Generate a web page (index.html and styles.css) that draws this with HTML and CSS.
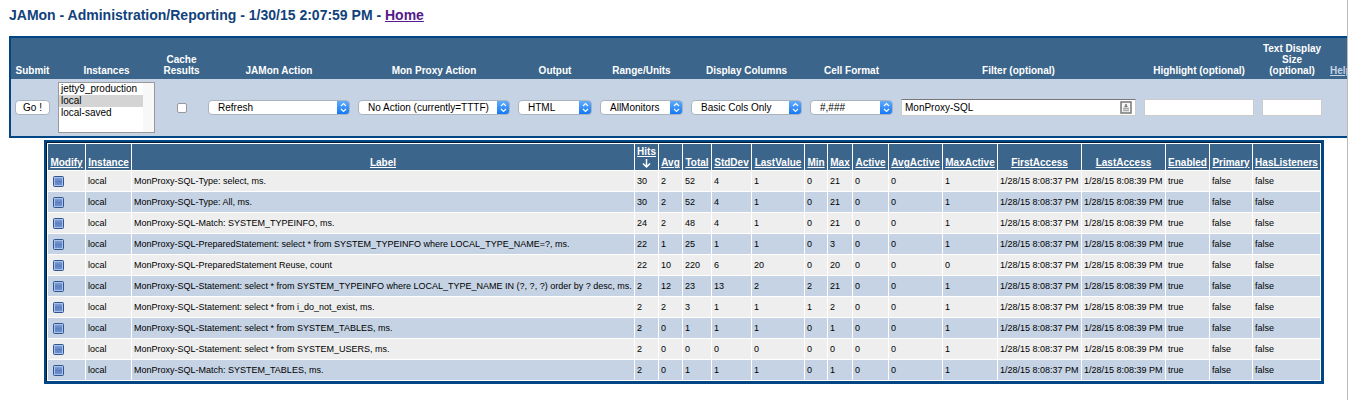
FILE: index.html
```html
<!DOCTYPE html>
<html lang="en">
<head>
<meta charset="utf-8">
<title>JAMon - Administration/Reporting</title>
<link rel="stylesheet" href="styles.css">
</head>
<body>
<svg class="defs" aria-hidden="true">
  <defs>
    <linearGradient id="box-fill" x1="0" y1="0" x2="0" y2="1">
      <stop offset="0" stop-color="#7f9cd3"/>
      <stop offset="0.5" stop-color="#5c80c2"/>
      <stop offset="1" stop-color="#6f90cd"/>
    </linearGradient>
    <symbol id="modify" viewBox="0 0 11 11">
      <rect x="0.5" y="0.5" width="10" height="10" rx="1" fill="#a9c1e8" stroke="#2f5590"/>
      <rect x="2" y="2" width="7" height="7" fill="url(#box-fill)"/>
    </symbol>
  </defs>
</svg>
<main class="page">
<h1 class="title">JAMon - Administration/Reporting - 1/30/15 2:07:59 PM - <a href="#home">Home</a></h1>
<form class="controls">
<table class="control-table">
<colgroup><col class="c-submit"><col class="c-instances"><col class="c-cache"><col class="c-action"><col class="c-proxy"><col class="c-output"><col class="c-range"><col class="c-display"><col class="c-format"><col class="c-filter"><col class="c-highlight"><col class="c-size"><col class="c-help"></colgroup>
<thead><tr>
<th>Submit</th>
<th><label for="instances">Instances</label></th>
<th><label for="cache">Cache Results</label></th>
<th><label for="action">JAMon Action</label></th>
<th><label for="proxy">Mon Proxy Action</label></th>
<th><label for="output">Output</label></th>
<th><label for="range">Range/Units</label></th>
<th><label for="display">Display Columns</label></th>
<th><label for="format">Cell Format</label></th>
<th><label for="filter">Filter (optional)</label></th>
<th><label for="highlight">Highlight (optional)</label></th>
<th><label for="size">Text Display Size (optional)</label></th>
<th class="help"><a href="#help">Help</a></th>
</tr></thead>
<tbody><tr>
<td><button class="go" type="button">Go !</button></td>
<td><select class="list" id="instances" multiple size="4"><option>jetty9_production</option><option class="chosen">local</option><option>local-saved</option></select></td>
<td class="center"><input class="check" type="checkbox" id="cache"></td>
<td><select class="pick" id="action"><option>Refresh</option></select></td>
<td><select class="pick" id="proxy"><option>No Action (currently=TTTF)</option></select></td>
<td><select class="pick" id="output"><option>HTML</option></select></td>
<td><select class="pick" id="range"><option>AllMonitors</option></select></td>
<td><select class="pick" id="display"><option>Basic Cols Only</option></select></td>
<td><select class="pick" id="format"><option>#,###</option></select></td>
<td><div class="filter-box"><input class="filter" type="text" id="filter" value="MonProxy-SQL"><svg class="badge" viewBox="0 0 12 13" aria-hidden="true"><rect x="1" y="1" width="10" height="11" fill="#f6f6f6" stroke="#777" stroke-width="1.5"/><path d="M6 3V6M4.500 5.500H7.500" stroke="#777" stroke-width="1.500"/><path d="M3 7.500H9M3 9.500H9" stroke="#aaa" stroke-width="1.500"/></svg></div></td>
<td><input class="plain" type="text" id="highlight"></td>
<td><input class="plain" type="text" id="size"></td>
<td></td>
</tr></tbody>
</table>
</form>
<div class="report-frame">
<table class="report">
<colgroup><col class="r-modify"><col class="r-instance"><col class="r-label"><col class="r-hits"><col class="r-hits"><col class="r-total"><col class="r-std"><col class="r-last"><col class="r-min"><col class="r-max"><col class="r-active"><col class="r-avgactive"><col class="r-maxactive"><col class="r-date"><col class="r-date"><col class="r-enabled"><col class="r-primary"><col class="r-listeners"></colgroup>
<thead><tr><th><a href="#modify-col">Modify</a></th><th><a href="#instance">Instance</a></th><th><a href="#label">Label</a></th><th><a href="#hits">Hits</a><br><svg class="arrow" viewBox="0 0 9 9" role="img" aria-label="sorted descending"><path d="M4.500 0V8M1 4.500L4.500 8L8 4.500" fill="none" stroke="#fff" stroke-width="1.500"/></svg></th><th><a href="#avg">Avg</a></th><th><a href="#total">Total</a></th><th><a href="#stddev">StdDev</a></th><th><a href="#lastvalue">LastValue</a></th><th><a href="#min">Min</a></th><th><a href="#max">Max</a></th><th><a href="#active">Active</a></th><th><a href="#avgactive">AvgActive</a></th><th><a href="#maxactive">MaxActive</a></th><th><a href="#firstaccess">FirstAccess</a></th><th><a href="#lastaccess">LastAccess</a></th><th><a href="#enabled">Enabled</a></th><th><a href="#primary">Primary</a></th><th><a href="#haslisteners">HasListeners</a></th></tr></thead>
<tbody>
<tr><td><a class="modify" href="#m1" aria-label="Modify"><svg><use href="#modify"/></svg></a></td><td>local</td><td>MonProxy-SQL-Type: select, ms.</td><td>30</td><td>2</td><td>52</td><td>4</td><td>1</td><td>0</td><td>21</td><td>0</td><td>0</td><td>1</td><td>1/28/15 8:08:37 PM</td><td>1/28/15 8:08:39 PM</td><td>true</td><td>false</td><td>false</td></tr>
<tr><td><a class="modify" href="#m2" aria-label="Modify"><svg><use href="#modify"/></svg></a></td><td>local</td><td>MonProxy-SQL-Type: All, ms.</td><td>30</td><td>2</td><td>52</td><td>4</td><td>1</td><td>0</td><td>21</td><td>0</td><td>0</td><td>1</td><td>1/28/15 8:08:37 PM</td><td>1/28/15 8:08:39 PM</td><td>true</td><td>false</td><td>false</td></tr>
<tr><td><a class="modify" href="#m3" aria-label="Modify"><svg><use href="#modify"/></svg></a></td><td>local</td><td>MonProxy-SQL-Match: SYSTEM_TYPEINFO, ms.</td><td>24</td><td>2</td><td>48</td><td>4</td><td>1</td><td>0</td><td>21</td><td>0</td><td>0</td><td>1</td><td>1/28/15 8:08:37 PM</td><td>1/28/15 8:08:39 PM</td><td>true</td><td>false</td><td>false</td></tr>
<tr><td><a class="modify" href="#m4" aria-label="Modify"><svg><use href="#modify"/></svg></a></td><td>local</td><td>MonProxy-SQL-PreparedStatement: select * from SYSTEM_TYPEINFO where LOCAL_TYPE_NAME=?, ms.</td><td>22</td><td>1</td><td>25</td><td>1</td><td>1</td><td>0</td><td>3</td><td>0</td><td>0</td><td>1</td><td>1/28/15 8:08:37 PM</td><td>1/28/15 8:08:39 PM</td><td>true</td><td>false</td><td>false</td></tr>
<tr><td><a class="modify" href="#m5" aria-label="Modify"><svg><use href="#modify"/></svg></a></td><td>local</td><td>MonProxy-SQL-PreparedStatement Reuse, count</td><td>22</td><td>10</td><td>220</td><td>6</td><td>20</td><td>0</td><td>20</td><td>0</td><td>0</td><td>0</td><td>1/28/15 8:08:37 PM</td><td>1/28/15 8:08:39 PM</td><td>true</td><td>false</td><td>false</td></tr>
<tr><td><a class="modify" href="#m6" aria-label="Modify"><svg><use href="#modify"/></svg></a></td><td>local</td><td>MonProxy-SQL-Statement: select * from SYSTEM_TYPEINFO where LOCAL_TYPE_NAME IN (?, ?, ?) order by ? desc, ms.</td><td>2</td><td>12</td><td>23</td><td>13</td><td>2</td><td>2</td><td>21</td><td>0</td><td>0</td><td>1</td><td>1/28/15 8:08:37 PM</td><td>1/28/15 8:08:39 PM</td><td>true</td><td>false</td><td>false</td></tr>
<tr><td><a class="modify" href="#m7" aria-label="Modify"><svg><use href="#modify"/></svg></a></td><td>local</td><td>MonProxy-SQL-Statement: select * from i_do_not_exist, ms.</td><td>2</td><td>2</td><td>3</td><td>1</td><td>1</td><td>1</td><td>2</td><td>0</td><td>0</td><td>1</td><td>1/28/15 8:08:37 PM</td><td>1/28/15 8:08:39 PM</td><td>true</td><td>false</td><td>false</td></tr>
<tr><td><a class="modify" href="#m8" aria-label="Modify"><svg><use href="#modify"/></svg></a></td><td>local</td><td>MonProxy-SQL-Statement: select * from SYSTEM_TABLES, ms.</td><td>2</td><td>0</td><td>1</td><td>1</td><td>1</td><td>0</td><td>1</td><td>0</td><td>0</td><td>1</td><td>1/28/15 8:08:37 PM</td><td>1/28/15 8:08:39 PM</td><td>true</td><td>false</td><td>false</td></tr>
<tr><td><a class="modify" href="#m9" aria-label="Modify"><svg><use href="#modify"/></svg></a></td><td>local</td><td>MonProxy-SQL-Statement: select * from SYSTEM_USERS, ms.</td><td>2</td><td>0</td><td>0</td><td>0</td><td>0</td><td>0</td><td>0</td><td>0</td><td>0</td><td>1</td><td>1/28/15 8:08:37 PM</td><td>1/28/15 8:08:39 PM</td><td>true</td><td>false</td><td>false</td></tr>
<tr><td><a class="modify" href="#m10" aria-label="Modify"><svg><use href="#modify"/></svg></a></td><td>local</td><td>MonProxy-SQL-Match: SYSTEM_TABLES, ms.</td><td>2</td><td>0</td><td>1</td><td>1</td><td>1</td><td>0</td><td>1</td><td>0</td><td>0</td><td>1</td><td>1/28/15 8:08:37 PM</td><td>1/28/15 8:08:39 PM</td><td>true</td><td>false</td><td>false</td></tr>
</tbody>
</table>
</div>
</main>
</body>
</html>
```

FILE: styles.css
```css
* { box-sizing: border-box; }
body { margin: 0; background: #fff; font-family: "Liberation Sans", Arial, sans-serif; color: #000; }
.defs { position: absolute; width: 0; height: 0; }
.page { min-height: 100vh; padding: 7px 0 0 9px; border-right: 1px solid #bbb; overflow: hidden; }
.title { margin: 0 0 13px; font-size: 14px; line-height: 16px; font-weight: bold; color: #10427b; }
.title a { color: #551a8b; }

.controls { margin: 0 -13px 0 0; }
.control-table { width: 100%; border: 2px solid #004684; border-collapse: separate; border-spacing: 0; table-layout: fixed; background: #c5d3e4; }
.control-table th { height: 41px; padding: 0 4px 3px; background: #3b658b; color: #fff; font-size: 10px; line-height: 11px; vertical-align: bottom; }
.control-table td { height: 57px; padding: 0 4px; vertical-align: middle; }
.control-table .center { text-align: center; }
.control-table .help { text-align: left; }
.help a { color: #c5d3e4; }
.c-submit { width: 43px; }
.c-instances { width: 105px; }
.c-cache { width: 45px; }
.c-action { width: 150px; }
.c-proxy { width: 160px; }
.c-output { width: 82px; }
.c-range { width: 91px; }
.c-display { width: 119px; }
.c-format { width: 91px; }
.c-highlight { width: 118px; }
.c-size { width: 68px; }
.c-help { width: 32px; }

.go, .pick, .list, .filter, .plain { display: block; width: 100%; margin: 0; font-family: inherit; font-size: 10px; color: #000; }
.go { height: 15px; padding: 0; border: 1px solid #aab4c0; border-radius: 4px; background: #fff; line-height: 12px; }
.pick {
  height: 15px; padding: 0 18px 0 9px; border: 1px solid #aab4c0; border-radius: 4px; line-height: 13px;
  appearance: none; background-color: #fff; background-repeat: no-repeat; background-origin: border-box; background-position: right center; background-size: 13px 15px;
  background-image: url("data:image/svg+xml,%3Csvg xmlns='http://www.w3.org/2000/svg' viewBox='0 0 13 15'%3E%3Cdefs%3E%3ClinearGradient id='g' x2='0' y2='1'%3E%3Cstop stop-color='%2367b0fb'/%3E%3Cstop offset='1' stop-color='%230c74f8'/%3E%3C/linearGradient%3E%3C/defs%3E%3Cpath d='M0 0H9Q13 0 13 4V11Q13 15 9 15H0Z' fill='url(%23g)'/%3E%3Cpath d='M4 6L6.500 3.500L9 6M4 9L6.500 11.500L9 9' fill='none' stroke='white' stroke-width='1.200'/%3E%3C/svg%3E");
}
.list { height: 51px; padding: 0 11px 0 0; border: 1px solid #999; border-radius: 0; background: linear-gradient(#f8f8f8, #f8f8f8) right / 11px 100% no-repeat #fff; overflow: hidden; }
.list option { min-height: 0; height: 12px; padding: 0 2px; line-height: 12px; background: #fff; }
.list .chosen { background: #d4d4d4; }
.check { display: inline-block; width: 10px; height: 10px; margin: 0; border: 1px solid #999; border-radius: 2px; background: #fff; appearance: none; vertical-align: middle; }
.filter, .plain { height: 17px; padding: 0 3px; border: 1px solid #ccc; border-radius: 0; background: #fff; }
.filter { border-top: 1px solid #777; }
.filter-box { position: relative; }
.badge { position: absolute; right: 4px; top: 2px; width: 12px; height: 13px; }

.report-frame { margin: 2px 23px 16px 35px; border: solid #004684; border-width: 2px 3px 3px 2px; }
.report { width: 100%; border: 1px solid #001a33; border-right-width: 0; border-bottom-width: 0; border-collapse: separate; border-spacing: 1px; table-layout: fixed; background: #fff; font-size: 9px; line-height: 12px; }
.report th { height: 26px; padding: 2px 0; background: #3b658b; font-size: 10px; line-height: 11px; vertical-align: bottom; color: #fff; }
.report th a { color: #fff; }
.report td { height: 20px; padding: 0 2px; vertical-align: middle; white-space: nowrap; }
.report tbody tr:nth-child(odd) td { background: #eee; }
.report tbody tr:nth-child(even) td { background: #c5d3e4; }
.arrow { display: inline-block; width: 9px; height: 9px; vertical-align: middle; }
.modify, .modify svg { display: block; width: 11px; height: 11px; }
.modify { margin-left: 3px; }
.r-modify { width: 37px; }
.r-instance { width: 45px; }
.r-hits { width: 23px; }
.r-total { width: 28px; }
.r-std { width: 39px; }
.r-last { width: 52px; }
.r-min { width: 22px; }
.r-max { width: 24px; }
.r-active { width: 35px; }
.r-avgactive { width: 53px; }
.r-maxactive { width: 54px; }
.r-date { width: 83px; }
.r-enabled { width: 43px; }
.r-primary { width: 42px; }
.r-listeners { width: 67px; }
```
